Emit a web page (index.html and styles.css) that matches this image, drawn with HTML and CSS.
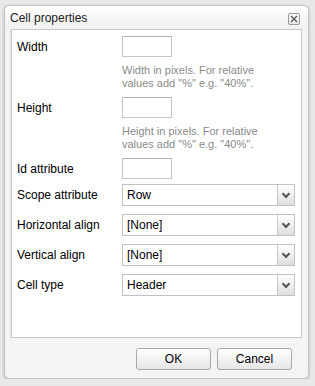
FILE: index.html
```html
<!DOCTYPE html>
<html lang="en">
<head>
    <meta charset="UTF-8">
    <title>Cell properties</title>
    <link rel="stylesheet" href="styles.css">
</head>
<body>
    <div class="dialog">
        <div class="dialog-title">
            <span>Cell properties</span>
            <span class="close-btn">
                <svg width="10" height="10" viewBox="0 0 10 10">
                    <path d="M2 2 L8 8 M8 2 L2 8" stroke="#555" stroke-width="1.3" fill="none"/>
                </svg>
            </span>
        </div>

        <div class="dialog-body">
            <div class="row first">
                <label class="field-label">Width</label>
                <input class="text-input" type="text">
            </div>
            <div class="hint">Width in pixels. For relative<br>values add "%" e.g. "40%".</div>

            <div class="row after-hint">
                <label class="field-label">Height</label>
                <input class="text-input" type="text">
            </div>
            <div class="hint">Height in pixels. For relative<br>values add "%" e.g. "40%".</div>

            <div class="row after-hint">
                <label class="field-label">Id attribute</label>
                <input class="text-input" type="text">
            </div>

            <div class="row select-row first-select">
                <label class="field-label">Scope attribute</label>
                <div class="select-box"><span class="select-value">Row</span><span class="select-arrow"></span></div>
            </div>
            <div class="row select-row">
                <label class="field-label">Horizontal align</label>
                <div class="select-box"><span class="select-value">[None]</span><span class="select-arrow"></span></div>
            </div>
            <div class="row select-row">
                <label class="field-label">Vertical align</label>
                <div class="select-box"><span class="select-value">[None]</span><span class="select-arrow"></span></div>
            </div>
            <div class="row select-row">
                <label class="field-label">Cell type</label>
                <div class="select-box"><span class="select-value">Header</span><span class="select-arrow"></span></div>
            </div>
        </div>

        <div class="dialog-footer">
            <button class="btn">OK</button>
            <button class="btn">Cancel</button>
        </div>
    </div>
</body>
</html>
```

FILE: styles.css
```css
body {
    margin: 0;
    padding: 5px 0 0 4px;
    background-color: #e9e9e9;
    font-family: "Liberation Sans", Arial, sans-serif;
    font-size: 12px;
    color: #000;
}
.dialog {
    width: 305px;
    height: 374px;
    box-sizing: border-box;
    display: flex;
    flex-direction: column;
    background-color: #f4f4f4;
    border: 1px solid #c4c4c4;
    border-radius: 5px;
    box-shadow: 0 1px 3px rgba(0,0,0,0.25);
}
.dialog-title {
    height: 23px;
    display: flex;
    align-items: center;
    justify-content: space-between;
    padding: 0 8px 0 5px;
    background: linear-gradient(#ffffff, #f0f0f0);
    border-radius: 5px 5px 0 0;
    color: #222;
    font-size: 12px;
}
.close-btn {
    width: 10px;
    height: 10px;
    border: 1px solid #9a9a9a;
    border-radius: 2px;
    background: linear-gradient(#ffffff, #e6e6e6);
    display: flex;
    align-items: center;
    justify-content: center;
    margin-top: 2px;
}
.dialog-body {
    flex: 1;
    margin: 0 6px;
    padding: 0 6px 0 5px;
    background-color: #fff;
    border: 1px solid #c8c8c8;
    box-shadow: -1px 0 0 #e2e2e2;
}
.row {
    display: flex;
    align-items: center;
    margin-top: 8px;
}
.row.first {
    margin-top: 6px;
}
.row.after-hint {
    margin-top: 7px;
}
.row.first-select {
    margin-top: 5px;
}
.field-label {
    width: 105px;
    flex-shrink: 0;
}
.text-input {
    width: 50px;
    height: 21px;
    box-sizing: border-box;
    margin: 0;
    border: 1px solid #c6c6c6;
    border-top-color: #b4b4b4;
    background-color: #fff;
}
.hint {
    margin: 7px 0 0 105px;
    font-size: 11px;
    line-height: 13px;
    color: #8a8a8a;
}
.select-box {
    width: 174px;
    height: 22px;
    box-sizing: border-box;
    display: flex;
    border: 1px solid #c2c2c2;
    background-color: #fff;
}
.select-value {
    flex: 1;
    padding-left: 4px;
    line-height: 20px;
}
.select-arrow {
    width: 16px;
    border-left: 1px solid #c8c8c8;
    background: linear-gradient(#ffffff, #dedede);
    position: relative;
}
.select-arrow::after {
    content: "";
    position: absolute;
    left: 5px;
    top: 6px;
    width: 4px;
    height: 4px;
    border-right: 2px solid #555;
    border-bottom: 2px solid #555;
    transform: rotate(45deg);
}
.dialog-footer {
    display: flex;
    justify-content: flex-end;
    gap: 6px;
    padding: 10px 16px 0 0;
    height: 30px;
}
.btn {
    width: 75px;
    height: 22px;
    font-family: "Liberation Sans", Arial, sans-serif;
    font-size: 12px;
    color: #000;
    border: 1px solid #a8a8a8;
    border-radius: 3px;
    background: linear-gradient(#ffffff, #e6e6e6);
    cursor: pointer;
}
```
